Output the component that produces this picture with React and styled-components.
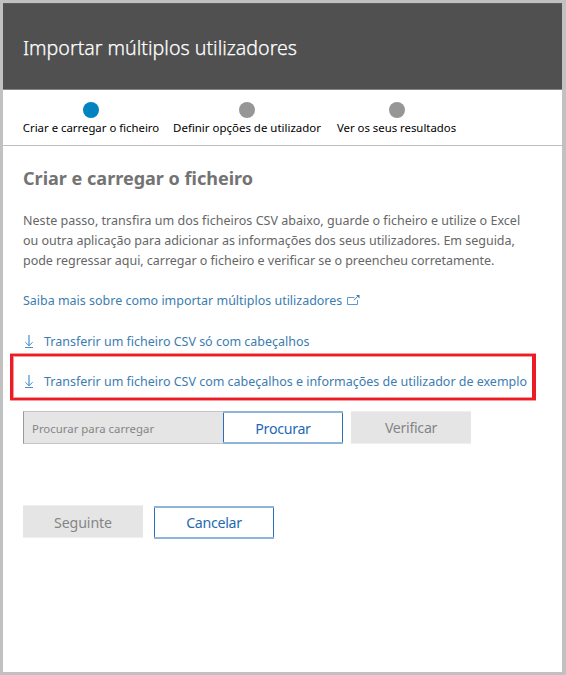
import React from 'react';
import styled, { createGlobalStyle } from 'styled-components';

const GlobalStyle = createGlobalStyle`
  *, *::before { box-sizing: border-box; }
  body {
    margin: 0;
    background: #fff;
    font-family: "Noto Sans", "Open Sans", sans-serif;
  }
  button, input { font-family: inherit; margin: 0; }
`;

const Panel = styled.main`
  width: 566px;
  height: 675px;
  border: 3px solid #c1c1c1;
  border-right-width: 4px;
  background: #fff;
`;

const Header = styled.header`
  display: flex;
  align-items: center;
  height: 87px;
  padding: 2px 20px 0;
  background: #505050;
  border-top: 1px solid #5c5c5c;
  border-bottom: 1px solid #858585;
`;

const Title = styled.h1`
  margin: 0;
  color: #fff;
  font-size: 19.6px;
  line-height: 28px;
  font-weight: 300;
  -webkit-text-stroke: 0.25px #fff;
`;

const Steps = styled.ol`
  display: flex;
  height: 56px;
  margin: 0;
  padding: 12px 20px 0;
  list-style: none;
  border-bottom: 1px solid #bfbfbf;
`;

const Step = styled.li`
  display: flex;
  flex-direction: column;
  align-items: center;
  width: ${(p) => p.$width}px;
  margin-right: ${(p) => p.$gap || 0}px;
  color: #000;
  font-size: ${(p) => p.$size}px;
  line-height: 16px;
  white-space: nowrap;
`;

const Dot = styled.span`
  width: 16px;
  height: 16px;
  margin-bottom: 2px;
  border-radius: 50%;
  background: ${(p) => (p.$active ? '#0083be' : '#969696')};
`;

const Content = styled.section`
  display: flex;
  flex-direction: column;
  align-items: flex-start;
  padding: 20px 20px 0;
`;

const Heading = styled.h2`
  margin: 0 0 21px;
  color: #737373;
  font-size: 18.05px;
  line-height: 24px;
  font-weight: 700;
`;

const Paragraph = styled.p`
  margin: 0 0 20px;
  color: #666;
  font-size: 12.5px;
  line-height: 20px;
  white-space: nowrap;
`;

const Line = styled.span`
  display: block;
  letter-spacing: ${(p) => p.$tracking}px;
`;

const Link = styled.a`
  display: flex;
  align-items: center;
  color: #3c7cb0;
  font-size: 12.47px;
  line-height: 20px;
  text-decoration: none;
  white-space: nowrap;
`;

const LearnMore = styled(Link)`
  gap: 4px;
  margin-bottom: 21px;

  svg { margin-bottom: 2px; }
`;

const Download = styled(Link)`
  gap: 10px;

  svg { margin-bottom: 3px; }
`;

const Highlight = styled.div`
  position: relative;
  width: 526px;
  height: 48px;
  margin: 1px 0 10px -13px;
  padding: 15px 0 0 9px;
  border: 4px solid #f5999c;

  &::before {
    content: "";
    position: absolute;
    inset: -3px -4px;
    border: solid #ed1c24;
    border-width: 2px 4px 2px 3px;
    pointer-events: none;
  }
`;

const UploadRow = styled.div`
  display: flex;
  margin-bottom: 61px;
`;

const FileField = styled.input`
  width: 200px;
  height: 33px;
  padding: 1px 8px 0;
  border: 1px solid #c6c6c6;
  border-left-color: #9a9a9a;
  border-right: 0;
  border-radius: 0;
  background: #e5e5e5;
  font-size: 11.4px;
  outline: none;

  &::placeholder { color: #858585; opacity: 1; }
`;

const Button = styled.button`
  width: 120px;
  height: 33px;
  padding: 2px 0 0;
  border: solid #8fb4da;
  border-width: 2px 0;
  box-shadow: inset 1px 0 #2a70b8, inset -1px 0 #2a70b8;
  background: #fff;
  color: #1f69b5;
  font-size: 14.2px;
  letter-spacing: -0.3px;
  line-height: 20px;
`;

const DisabledButton = styled(Button)`
  border: solid #efefef;
  border-width: 1px 0;
  box-shadow: none;
  background: #e5e5e5;
  color: #858585;
`;

const VerifyButton = styled(DisabledButton)`
  margin-left: 8px;
  padding-top: 0;
`;

const NextButton = styled(DisabledButton)`
  padding-top: 3px;
  letter-spacing: -0.1px;
`;

const Actions = styled.div`
  display: flex;
  gap: 11px;
`;

const CancelButton = styled(Button)`
  margin-top: 1px;
  padding-top: 1px;
`;

const DownloadIcon = () => (
  <svg width="11" height="14" viewBox="0 0 11 14" fill="none" aria-hidden="true">
    <path d="M6 1v11" stroke="#8fbce2" strokeWidth="2" />
    <path d="M2.3 8.2l3.7 3.5 3.7-3.5" stroke="#4b8cc8" />
    <path d="M2 13.5h8" stroke="#4b8cc8" />
  </svg>
);

const ExternalIcon = () => (
  <svg width="14" height="12" viewBox="0 0 14 12" fill="none" stroke="#5b9bd5" aria-hidden="true">
    <path d="M8.5 3.5h-7v7h10V6" />
    <path d="M8 6.2l4-4" stroke="#3c7cb0" />
    <path d="M10 1h3.5v3.5z" fill="#3c7cb0" stroke="none" />
  </svg>
);

export default function App() {
  return (
    <>
      <GlobalStyle />
      <Panel>
        <Header>
          <Title>Importar múltiplos utilizadores</Title>
        </Header>
        <Steps>
          <Step $width={136} $gap={14} $size={11.36}><Dot $active />Criar e carregar o ficheiro</Step>
          <Step $width={148} $gap={16} $size={11.46}><Dot />Definir opções de utilizador</Step>
          <Step $width={119} $size={11.36}><Dot />Ver os seus resultados</Step>
        </Steps>
        <Content>
          <Heading>Criar e carregar o ficheiro</Heading>
          <Paragraph>
            <Line $tracking={0.03}>Neste passo, transfira um dos ficheiros CSV abaixo, guarde o ficheiro e utilize o Excel</Line>
            <Line $tracking={-0.01}>ou outra aplicação para adicionar as informações dos seus utilizadores. Em seguida,</Line>
            <Line $tracking={-0.03}>pode regressar aqui, carregar o ficheiro e verificar se o preencheu corretamente.</Line>
          </Paragraph>
          <LearnMore href="#">
            Saiba mais sobre como importar múltiplos utilizadores
            <ExternalIcon />
          </LearnMore>
          <Download href="#"><DownloadIcon />Transferir um ficheiro CSV só com cabeçalhos</Download>
          <Highlight>
            <Download href="#">
              <DownloadIcon />Transferir um ficheiro CSV com cabeçalhos e informações de utilizador de exemplo
            </Download>
          </Highlight>
          <UploadRow>
            <FileField placeholder="Procurar para carregar" readOnly />
            <Button>Procurar</Button>
            <VerifyButton disabled>Verificar</VerifyButton>
          </UploadRow>
          <Actions>
            <NextButton disabled>Seguinte</NextButton>
            <CancelButton>Cancelar</CancelButton>
          </Actions>
        </Content>
      </Panel>
    </>
  );
}
